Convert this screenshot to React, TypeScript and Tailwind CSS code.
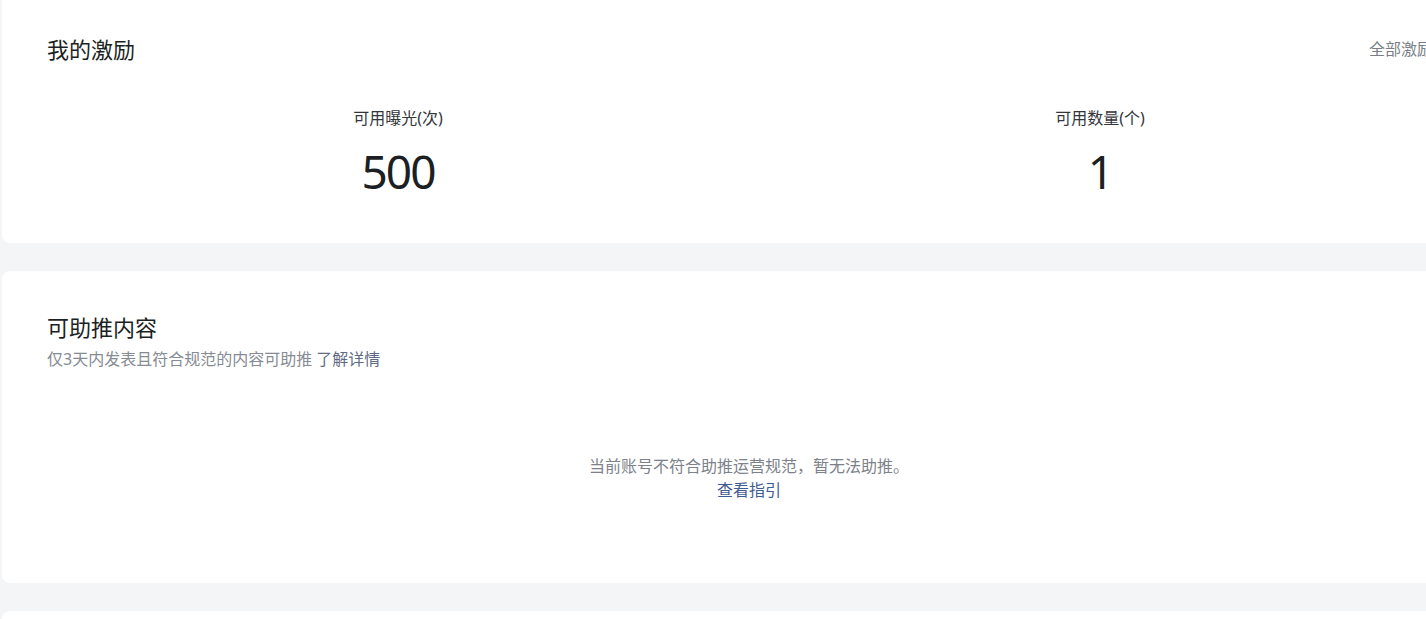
import React from "react";

const font = { fontFamily: '"Noto Sans", "Noto Sans CJK SC", sans-serif' };

const Stat = ({ label, value }: { label: string; value: string }) => (
  <div className="flex flex-col items-center">
    <div className="text-[16px] leading-[24px] text-[#33363b]">{label}</div>
    <div className="mt-[13px] text-[46px] leading-[56px] tracking-[-2px] text-[#1c1f23]">{value}</div>
  </div>
);

const App = () => {
  return (
    <div className="w-[1426px] h-[619px] overflow-hidden bg-[#f4f5f7]" style={font}>
      <div className="w-[1494px] ml-[2px] flex flex-col gap-[28px]">
        <section className="bg-white rounded-b-lg px-[45px] pt-[34px] pb-[44px]">
          <div className="flex items-center justify-between">
            <h2 className="text-[22px] leading-[30px] text-[#1c1f23]">我的激励</h2>
            <a className="flex items-center gap-1 text-[16px] text-[#7a7f87]">
              全部激励
              <svg width="14" height="14" viewBox="0 0 16 16" fill="none" stroke="currentColor" strokeWidth="1.5">
                <path d="M6 3l5 5-5 5" />
              </svg>
            </a>
          </div>
          <div className="grid grid-cols-2 mt-[42px]">
            <Stat label="可用曝光(次)" value="500" />
            <Stat label="可用数量(个)" value="1" />
          </div>
        </section>

        <section className="bg-white rounded-lg px-[45px] pt-[41px] pb-[81px]">
          <h2 className="text-[22px] leading-[30px] text-[#1c1f23]">可助推内容</h2>
          <p className="mt-[5px] text-[16px] leading-[24px] text-[#868b94]">
            仅3天内发表且符合规范的内容可助推 <a className="text-[#5f6b85]">了解详情</a>
          </p>
          <div className="mt-[83px] flex flex-col items-center text-[16px] leading-[24px]">
            <span className="text-[#7d828a]">当前账号不符合助推运营规范，暂无法助推。</span>
            <a className="text-[#3f5b93]">查看指引</a>
          </div>
        </section>

        <section className="bg-white rounded-lg h-[200px]" />
      </div>
    </div>
  );
};

export default App;
